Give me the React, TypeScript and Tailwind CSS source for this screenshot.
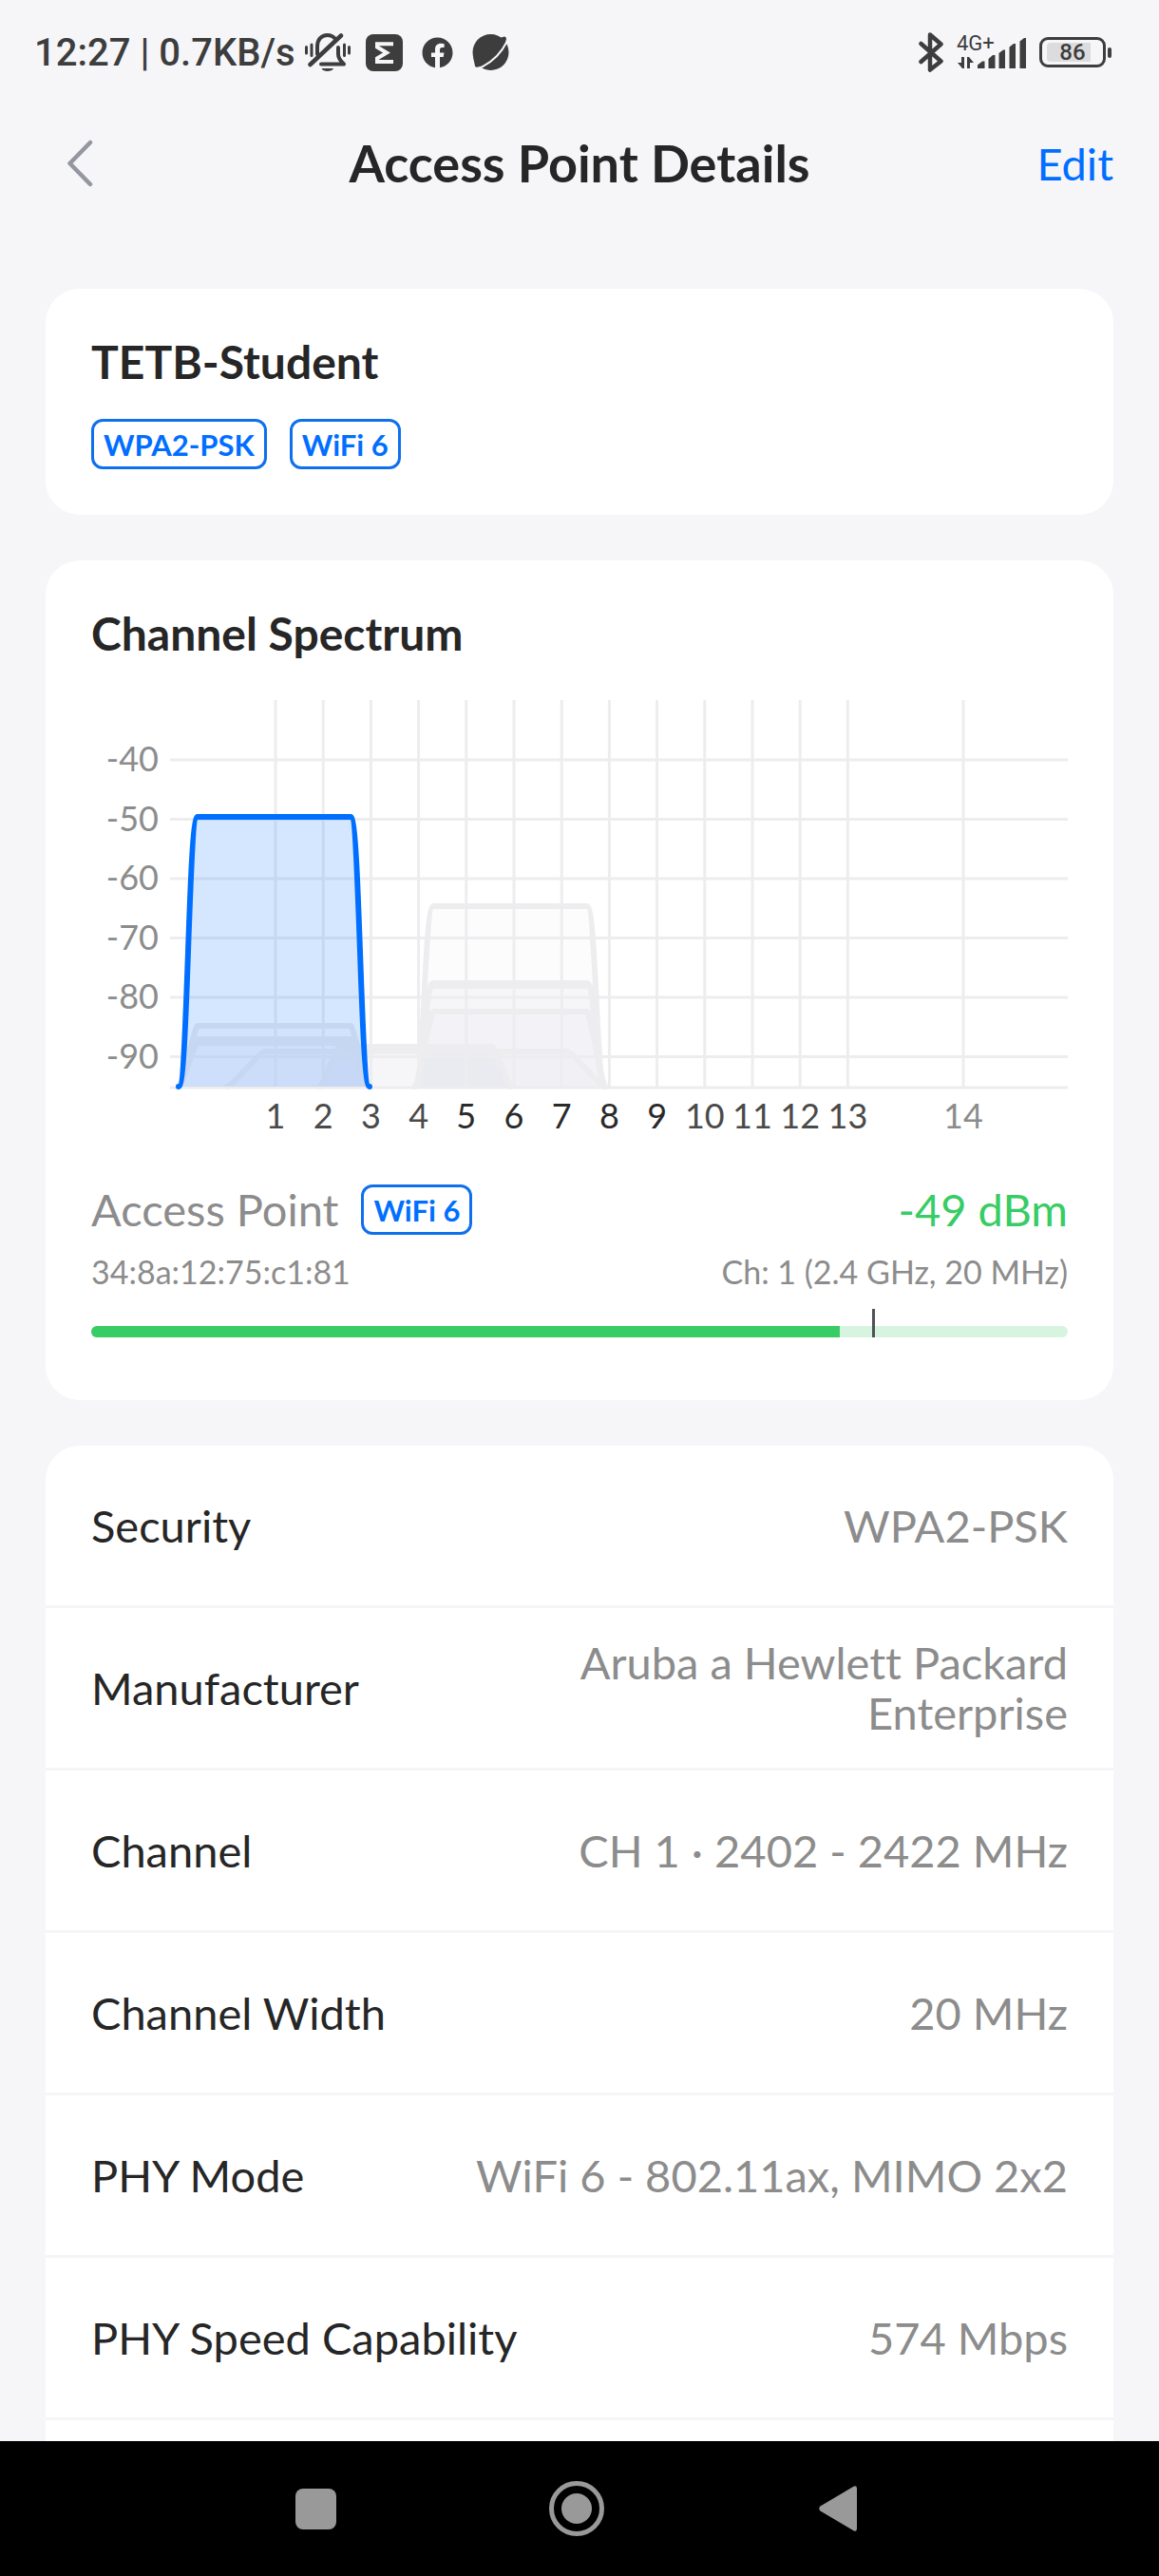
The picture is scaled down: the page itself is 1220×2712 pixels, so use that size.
import type { ReactNode } from "react";
import { FaFacebook } from "react-icons/fa";

const details: { label: string; value: string }[] = [
  { label: "Security", value: "WPA2-PSK" },
  { label: "Manufacturer", value: "Aruba a Hewlett Packard Enterprise" },
  { label: "Channel", value: "CH 1 · 2402 - 2422 MHz" },
  { label: "Channel Width", value: "20 MHz" },
  { label: "PHY Mode", value: "WiFi 6 - 802.11ax, MIMO 2x2" },
  { label: "PHY Speed Capability", value: "574 Mbps" },
];

/* ---------- status bar ---------- */

function MutedBellIcon() {
  return (
    <svg className="h-10 w-12" viewBox="0 0 48 40" fill="none" stroke="#3d3d3d" strokeWidth="4" strokeLinecap="round" strokeLinejoin="round" aria-hidden="true">
      <path d="M13 22V14C13 6.5 17.5 2 23.5 2C27 2 30 3.5 32 6" />
      <path d="M35 15V22C35 27 38 29.5 41 32.5H17" />
      <path d="M5.5 33L38 2.5" strokeWidth="4.5" />
      <path d="M17.5 37H30C29 39.3 26.5 40 23.7 40C21 40 18.5 39.3 17.5 37Z" fill="#3d3d3d" stroke="none" />
      <path d="M1.5 14.5V21M46.5 14.5V21" strokeWidth="3" />
      <path d="M7 12V23.5M41.5 12V23.5" strokeWidth="3" />
    </svg>
  );
}

function SigmaIcon() {
  return (
    <svg className="size-[39px]" viewBox="0 0 39 39" aria-hidden="true">
      <rect width="39" height="39" rx="8" fill="#3d3d3d" />
      <path d="M29 10.2H12V13.5L22 19.5L12 25.5V29H29" fill="none" stroke="#f6f6f9" strokeWidth="4" />
    </svg>
  );
}

function PlanetIcon() {
  return (
    <svg className="size-[39px]" viewBox="0 0 39 39" aria-hidden="true">
      <g fill="#3d3d3d">
        <circle cx="19.5" cy="19" r="19" />
        <path d="M27 5L33.5 2.5Q37 2.5 35.5 7L33 13Z" />
        <path d="M1 24L3 33.5Q4 36 9 33.5L14 30Z" />
      </g>
      <path d="M8 35.5Q27 27 36.5 8" fill="none" stroke="#f6f6f9" strokeWidth="2" />
    </svg>
  );
}

function BluetoothIcon() {
  return (
    <svg className="h-[42px] w-[26px]" viewBox="0 0 26 42" fill="none" stroke="#3d3d3d" strokeWidth="4.5" strokeLinecap="round" strokeLinejoin="round" aria-hidden="true">
      <path d="M2.5 12L23.500 30.5L12 39.5V2.5L23.500 12.500L2.5 31" />
    </svg>
  );
}

function SignalIcon() {
  return (
    <svg className="h-[42px] w-[73px]" viewBox="0 0 73 42" fill="#3d3d3d" role="img" aria-label="4G+ signal">
      <text x="0" y="19" className="font-['Roboto',sans-serif] text-[22px]">4G+</text>
      <path d="M8 26V38H6L1 32H5V26Z" />
      <path d="M11 38V26H13L18 32H14V38Z" />
      <path d="M22 38V34.5L27 30.5H29.5V38Z" />
      <path d="M33.5 38V28L38 24H40.5V38Z" />
      <path d="M44.5 38V22L49 18.5H51V38Z" />
      <path d="M55.5 38V15.5L60 12H62V38Z" />
      <path d="M66.5 38V9.5L71 6H73V38Z" />
    </svg>
  );
}

function Battery() {
  return (
    <div className="flex items-center gap-0.5">
      <div className="flex h-8 w-[70px] items-center rounded-[9px] border-3 border-[#3d3d3d] px-[5px]">
        <div className="relative h-5 w-full">
          <div className="h-full w-[86%] rounded-l bg-[#dcdcde]" />
          <span className="absolute inset-0 flex items-center justify-center font-['Roboto',sans-serif] text-2xl font-medium">86</span>
        </div>
      </div>
      <div className="h-[11px] w-1 rounded-sm bg-[#3d3d3d]" />
    </div>
  );
}

function StatusBar() {
  return (
    <div className="flex h-[110px] shrink-0 items-center justify-between pr-[50px] pl-9 text-[#3d3d3d]">
      <div className="flex items-center gap-2.5">
        <span className="pt-0.5 font-['Roboto',sans-serif] text-[40px] leading-[48px] font-medium">12:27 | 0.7KB/s</span>
        <div className="flex items-center gap-4">
          <MutedBellIcon />
          <SigmaIcon />
        </div>
        <div className="ml-2.5 flex items-center gap-5">
          <FaFacebook className="size-[33px]" />
          <PlanetIcon />
        </div>
      </div>
      <div className="flex items-center gap-3.5">
        <BluetoothIcon />
        <SignalIcon />
        <Battery />
      </div>
    </div>
  );
}

/* ---------- header ---------- */

function Header() {
  return (
    <header className="grid h-[124px] shrink-0 grid-cols-[1fr_auto_1fr] items-center px-12">
      <button type="button" aria-label="Back" className="flex size-[72px] items-center justify-center justify-self-start">
        <svg className="h-[50px] w-7" viewBox="0 0 28 50" fill="none" stroke="#9496a0" strokeWidth="4.5" strokeLinecap="round" strokeLinejoin="round" aria-hidden="true">
          <path d="M25 3L3.5 25L25 47" />
        </svg>
      </button>
      <h1 className="text-[54px] leading-[64px] font-bold">Access Point Details</h1>
      <button type="button" className="justify-self-end text-[47px] leading-[56px] text-[#006fff]">Edit</button>
    </header>
  );
}

/* ---------- shared pieces ---------- */

function Badge({ children }: { children: ReactNode }) {
  return (
    <span className="flex h-[53px] items-center rounded-xl border-3 border-[#1070ec] px-2.5 text-[31px] leading-[40px] font-bold text-[#006fff]">
      {children}
    </span>
  );
}

function Card({ children, className }: { children: ReactNode; className: string }) {
  return <section className={`rounded-[36px] bg-white ${className}`}>{children}</section>;
}

/* ---------- channel spectrum chart ---------- */

const BASE = 417;
const channelX = (ch: number) => (ch === 14 ? 918 : 194 + 50.2 * (ch - 1));
const levelY = (dbm: number) => 73 + (-40 - dbm) * 6.25;
const channels = Array.from({ length: 14 }, (_, i) => i + 1);
const levels = [-40, -50, -60, -70, -80, -90];

function channelColor(ch: number) {
  if (ch === 14) return "#8c8c8c";
  return ch >= 5 && ch <= 9 ? "#2a2a2a" : "#4a4a4a";
}

type Network = { left: number; right: number; slope: number; top: number };

const neighbours: Network[] = [
  { left: 341, right: 541, slope: 19, top: 227 },
  { left: 341, right: 541, slope: 19, top: 308 },
  { left: 341, right: 541, slope: 19, top: 311 },
  { left: 341, right: 541, slope: 19, top: 338 },
  { left: 92, right: 293, slope: 20, top: 353 },
  { left: 92, right: 293, slope: 20, top: 367 },
  { left: 92, right: 293, slope: 20, top: 371 },
  { left: 241, right: 442, slope: 20, top: 375 },
  { left: 241, right: 442, slope: 20, top: 378 },
  { left: 143, right: 541, slope: 40, top: 380 },
];

/* Weak signals get nearly straight flanks, strong ones a smooth S-curve. */
function shape({ left, right, slope, top }: Network) {
  const h = slope * (top > 330 ? 0.15 : 0.5);
  return `M${left} ${BASE}C${left + h} ${BASE} ${left + slope - h} ${top} ${left + slope} ${top}H${right - slope}C${right - slope + h} ${top} ${right - h} ${BASE} ${right} ${BASE}`;
}

function SpectrumChart() {
  const own = shape({ left: 92, right: 293, slope: 20, top: 133 });
  return (
    <svg className="mt-8 block w-full" viewBox="0 0 1028 480" role="img" aria-label="Channel spectrum">
      {neighbours.map((n, i) => (
        <path key={i} d={shape(n)} fill="#c8c8e0" fillOpacity="0.05" />
      ))}
      <g stroke="#ededef" strokeWidth="3">
        {channels.map((ch) => (
          <line key={ch} x1={channelX(ch)} x2={channelX(ch)} y1="10" y2="418" />
        ))}
        {levels.map((l) => (
          <line key={l} x1="83" x2="1028" y1={levelY(l)} y2={levelY(l)} />
        ))}
        <line x1="83" x2="1028" y1="418" y2="418" />
      </g>
      <g fill="none" stroke="#ededef" strokeWidth="6" strokeLinecap="round" strokeLinejoin="round">
        {neighbours.map((n, i) => (
          <path key={i} d={shape(n)} />
        ))}
      </g>
      <path d={own} fill="#006fff" fillOpacity="0.165" stroke="#006fff" strokeWidth="6" strokeLinecap="round" />
      <g fontSize="36">
        {levels.map((l) => (
          <text key={l} x="71" y={levelY(l) + 12} textAnchor="end" fill="#8c8c8c">{l}</text>
        ))}
        {channels.map((ch) => (
          <text key={ch} x={channelX(ch)} y="461" textAnchor="middle" fill={channelColor(ch)}>{ch}</text>
        ))}
      </g>
    </svg>
  );
}

/* ---------- page ---------- */

function SignalMeter() {
  return (
    <div className="relative mt-4 flex h-[30px] items-end" role="meter" aria-label="Signal strength" aria-valuemin={-100} aria-valuemax={0} aria-valuenow={-49}>
      <div className="h-3 w-full overflow-hidden rounded-full bg-[#d7f4e1]">
        <div className="h-full w-[76.7%] bg-[#38cc65]" />
      </div>
      <div className="absolute inset-y-0 left-[80%] w-[3px] bg-[#505258]" />
    </div>
  );
}

function NavBar() {
  return (
    <nav className="flex h-[142px] shrink-0 items-center justify-center gap-[215px] bg-black pr-1.5">
      <button type="button" aria-label="Recent apps" className="flex size-[60px] items-center justify-center">
        <span className="size-[43px] rounded-lg bg-[#999999]" />
      </button>
      <button type="button" aria-label="Home" className="flex size-[60px] items-center justify-center">
        <span className="flex size-[58px] items-center justify-center rounded-full border-5 border-[#999999]">
          <span className="size-8 rounded-full bg-[#999999]" />
        </span>
      </button>
      <button type="button" aria-label="Back" className="flex size-[60px] items-center justify-center">
        <svg className="h-12 w-10" viewBox="0 0 40 48" fill="#999999" aria-hidden="true">
          <path d="M36.5 0.8Q40 -1 40 3V45Q40 49 36.5 47.2L1.5 26.5Q-1 24 1.5 21.5Z" />
        </svg>
      </button>
    </nav>
  );
}

export default function App() {
  return (
    <div className="flex h-screen flex-col bg-[#f6f6f9] font-['Lato',sans-serif] text-[#262626] [font-variant-ligatures:none]">
      <StatusBar />
      <Header />
      <main className="flex min-h-0 flex-1 flex-col gap-12 overflow-hidden px-12 pt-[70px]">
        <Card className="shrink-0 p-12">
          <h2 className="text-[48px] leading-[57px] font-bold">TETB-Student</h2>
          <div className="mt-8 flex gap-6">
            <Badge>WPA2-PSK</Badge>
            <Badge>WiFi 6</Badge>
          </div>
        </Card>

        <Card className="shrink-0 px-12 pt-12 pb-[66px]">
          <h2 className="text-[48px] leading-[57px] font-bold">Channel Spectrum</h2>
          <SpectrumChart />
          <div className="mt-10 flex items-center justify-between">
            <div className="flex items-center gap-6 text-[47px] leading-[53px] text-[#8c8c8c]">
              Access Point
              <Badge>WiFi 6</Badge>
            </div>
            <span className="text-[47px] leading-[53px] text-[#38cc65]">-49 dBm</span>
          </div>
          <div className="mt-4 flex justify-between text-[34px] leading-[46px] text-[#8c8c8c]">
            <span>34:8a:12:75:c1:81</span>
            <span>Ch: 1 (2.4 GHz, 20 MHz)</span>
          </div>
          <SignalMeter />
        </Card>

        <Card className="shrink-0 pb-24">
          <dl>
            {details.map(({ label, value }) => (
              <div key={label} className="flex min-h-[171px] items-center justify-between border-b-3 border-[#f5f5f7] px-12 text-[47px] leading-[53px]">
                <dt>{label}</dt>
                <dd className="max-w-[62%] text-right text-[#8c8c8c]">{value}</dd>
              </div>
            ))}
          </dl>
        </Card>
      </main>
      <NavBar />
    </div>
  );
}
